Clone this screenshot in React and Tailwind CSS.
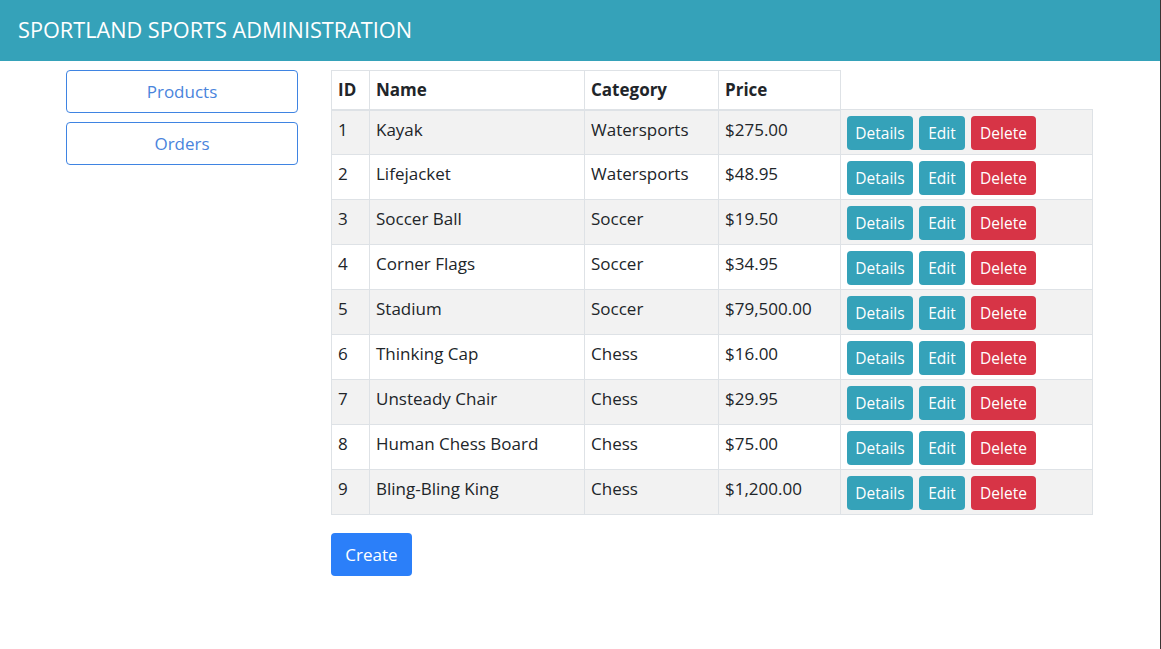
const products = [
  { id: 1, name: 'Kayak', category: 'Watersports', price: '$275.00' },
  { id: 2, name: 'Lifejacket', category: 'Watersports', price: '$48.95' },
  { id: 3, name: 'Soccer Ball', category: 'Soccer', price: '$19.50' },
  { id: 4, name: 'Corner Flags', category: 'Soccer', price: '$34.95' },
  { id: 5, name: 'Stadium', category: 'Soccer', price: '$79,500.00' },
  { id: 6, name: 'Thinking Cap', category: 'Chess', price: '$16.00' },
  { id: 7, name: 'Unsteady Chair', category: 'Chess', price: '$29.95' },
  { id: 8, name: 'Human Chess Board', category: 'Chess', price: '$75.00' },
  { id: 9, name: 'Bling-Bling King', category: 'Chess', price: '$1,200.00' },
];

const cell = 'border border-[#dee2e6] px-[6px] pt-[6px] pb-[4px] align-top';

export default function App() {
  return (
    <div
      className="w-[1161px] h-[649px] bg-white border-r border-[#3a3433] text-[#212529]"
      style={{ fontFamily: '"Open Sans", "Noto Sans", sans-serif' }}
    >
      <header className="h-[61px] bg-[#35a2b9] flex items-center pl-[18px]">
        <h1 className="text-white text-[21.7px]">SPORTLAND SPORTS ADMINISTRATION</h1>
      </header>

      <div className="flex pt-[9px]">
        <nav className="ml-[66px] w-[232px] flex flex-col gap-[9px]">
          <button className="h-[43px] rounded-[4px] border border-[#3f84e2] text-[#4a84dc] text-[17px]">Products</button>
          <button className="h-[43px] rounded-[4px] border border-[#3f84e2] text-[#4a84dc] text-[17px]">Orders</button>
        </nav>

        <main className="ml-[33px]">
          <table className="border-collapse text-[17px] leading-[26px]">
            <thead>
              <tr className="text-left font-bold">
                <th className={`${cell} w-[38px] border-b-2 h-[39px]`}>ID</th>
                <th className={`${cell} w-[215px] border-b-2`}>Name</th>
                <th className={`${cell} w-[134px] border-b-2`}>Category</th>
                <th className={`${cell} w-[122px] border-b-2`}>Price</th>
              </tr>
            </thead>
            <tbody>
              {products.map((p, i) => (
                <tr key={p.id} className={i % 2 === 0 ? 'bg-[#f2f2f2]' : 'bg-white'}>
                  <td className={`${cell} pt-[5px]`}>{p.id}</td>
                  <td className={`${cell} pt-[5px]`}>{p.name}</td>
                  <td className={`${cell} pt-[5px]`}>{p.category}</td>
                  <td className={`${cell} pt-[5px]`}>{p.price}</td>
                  <td className={`${cell} w-[252px]`}>
                    <div className="flex gap-[6px] text-white text-[15.5px]">
                      <button className="w-[66px] h-[34px] rounded-[4px] bg-[#35a2b9]">Details</button>
                      <button className="w-[46px] h-[34px] rounded-[4px] bg-[#35a2b9]">Edit</button>
                      <button className="w-[65px] h-[34px] rounded-[4px] bg-[#d73446]">Delete</button>
                    </div>
                  </td>
                </tr>
              ))}
            </tbody>
          </table>

          <button className="mt-[18px] w-[81px] h-[43px] rounded-[4px] bg-[#2b7ff9] text-white text-[17px]">
            Create
          </button>
        </main>
      </div>
    </div>
  );
}
